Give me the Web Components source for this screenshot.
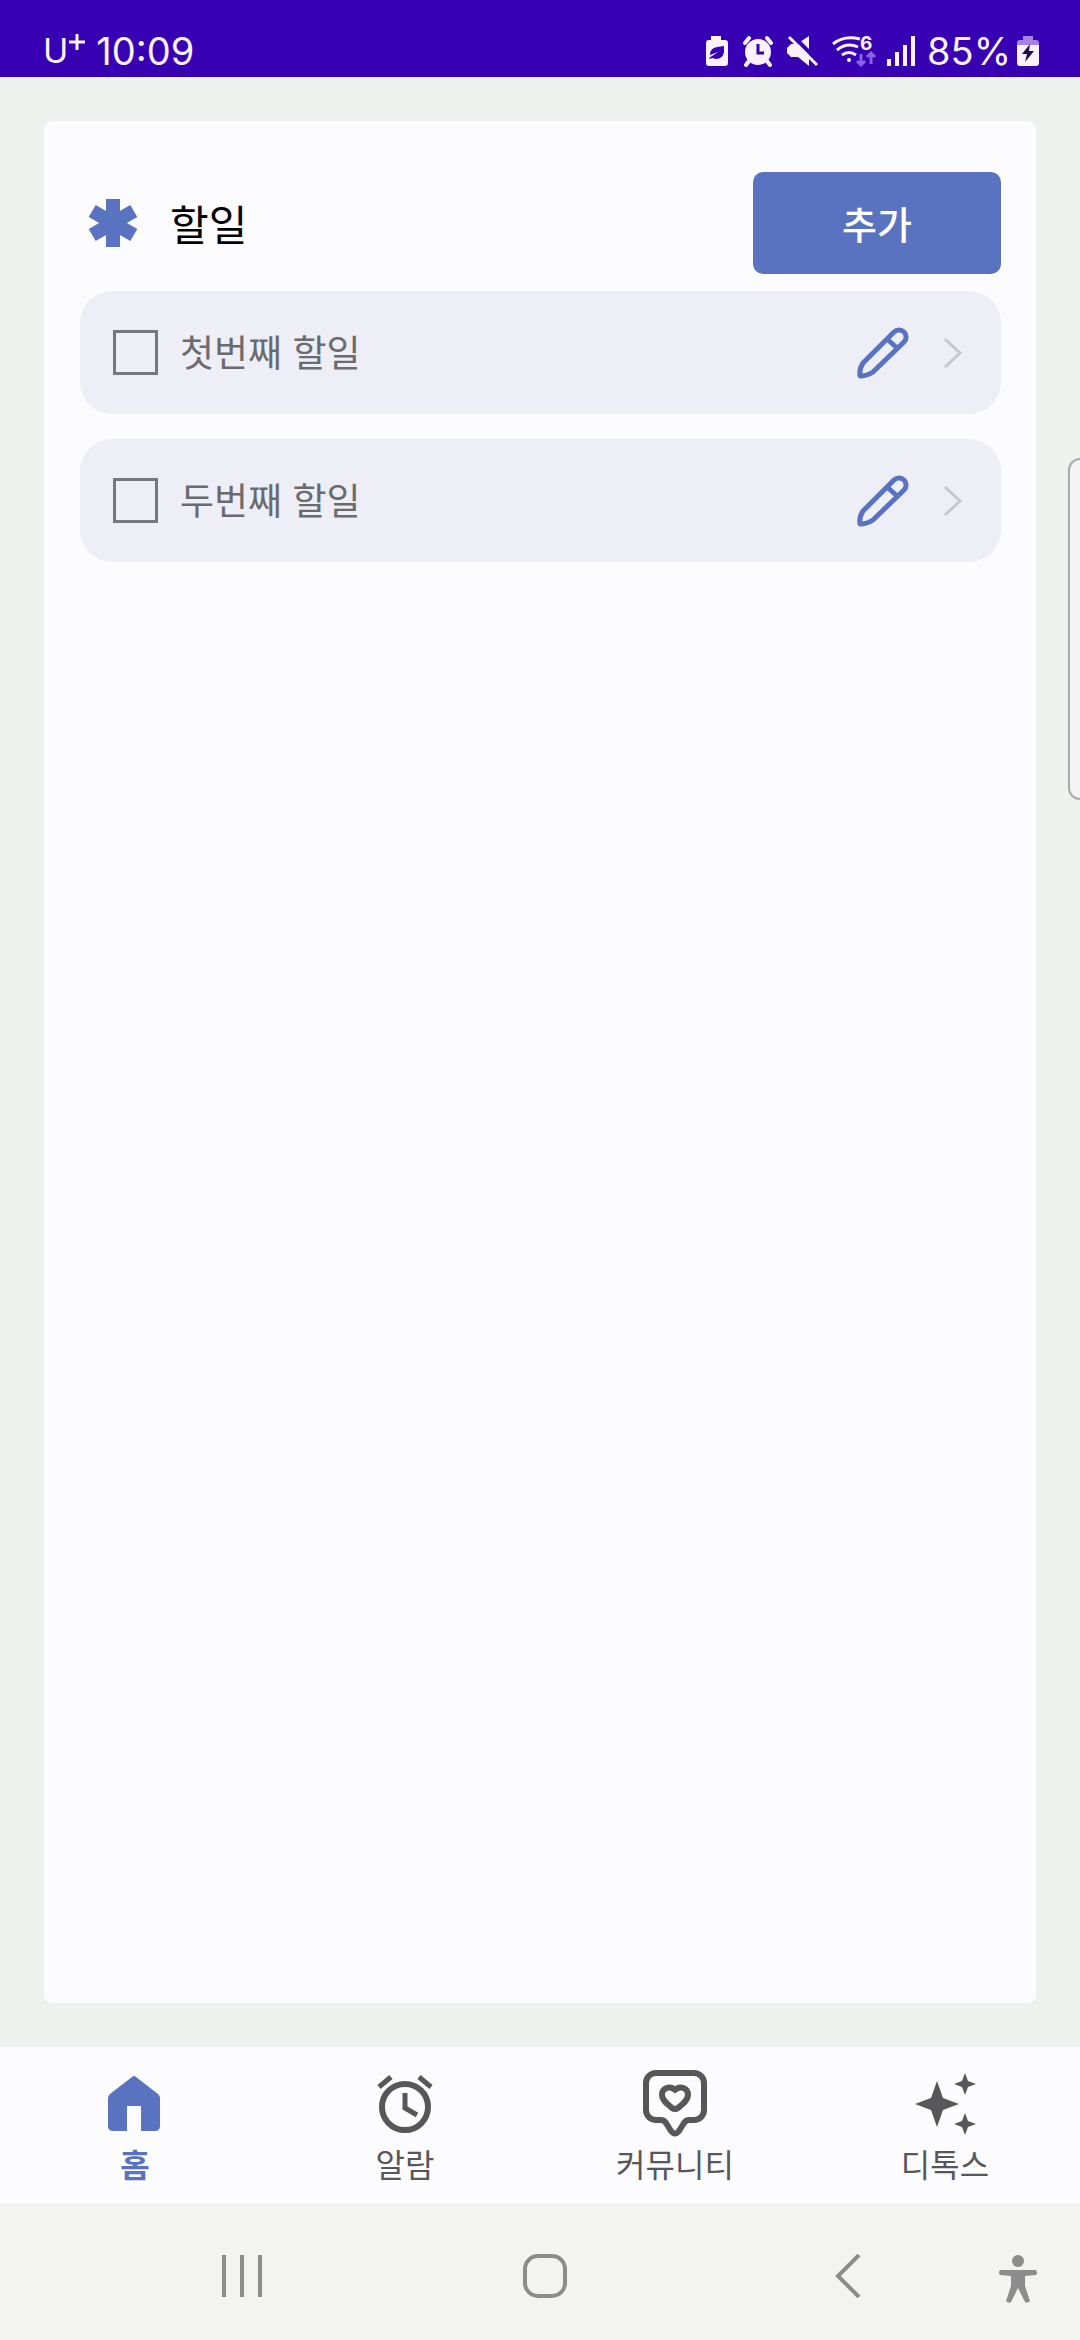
<!DOCTYPE html>
<html lang="ko">
<head>
<meta charset="utf-8">
<meta name="viewport" content="width=device-width, initial-scale=1">
<title>할일</title>
<style>
body {
  margin: 0;
  font-family: "Noto Sans CJK KR", sans-serif;
  --accent: #5a73c1;
  --page: #eef2ee;
  --surface: #fcfcfe;
  --muted: #6b6b6f;
}
</style>
</head>
<body>
<todo-app>
  <status-bar slot="top" carrier="U" time="10:09" battery="85%"></status-bar>
  <todo-card heading="할일" action="추가">
    <todo-item>첫번째 할일</todo-item>
    <todo-item>두번째 할일</todo-item>
  </todo-card>
  <tab-bar slot="bottom">
    <tab-item icon="home" active>홈</tab-item>
    <tab-item icon="alarm">알람</tab-item>
    <tab-item icon="community">커뮤니티</tab-item>
    <tab-item icon="detox">디톡스</tab-item>
  </tab-bar>
  <system-bar slot="bottom"></system-bar>
</todo-app>

<script>
// Tab icons, all on the same 68px grid
const tabIcons = {
  home: `<path fill="currentColor" d="M31 8q2-2 4 0L57 25q2 2 2 4v28q0 5-5 5H40V37H26v25H12q-5 0-5-5V29q0-2 2-4z"/>`,
  alarm: `<g fill="none" stroke="currentColor" stroke-width="5">
    <circle cx="34" cy="38" r="23" stroke-width="6"/>
    <path d="M34 24v15l12 7M8 18l12-10M48 8l12 10"/></g>`,
  community: `<g fill="none" stroke="currentColor" stroke-width="6" stroke-linejoin="round">
    <path d="M15 4h38a10 10 0 0 1 10 10v27a10 10 0 0 1-10 10h-5q-3 0-5 3l-5 8q-4 5-8 0l-5-8q-2-3-5-3h-5A10 10 0 0 1 5 41V14A10 10 0 0 1 15 4z"/>
    <path d="M34 21c-5-5-13-2-13 5 0 5 4 8 10 13q3 2 6 0c6-5 10-8 10-13 0-7-8-10-13-5z"/></g>`,
  detox: `<path fill="currentColor" d="M26 12l6 17 16 6-16 6-6 17-6-17-16-6 16-6zM54 4l3 8 8 3-8 3-3 8-3-8-8-3 8-3zM54 44l3 8 8 3-8 3-3 8-3-8-8-3 8-3z"/>`
};

// Helper for the elements that have fixed markup
function attach(host, html) {
  const shadow = host.attachShadow({ mode: 'open' });
  shadow.innerHTML = html;
  return shadow;
}

class TodoApp extends HTMLElement {
  constructor() {
    super();
    attach(this, `
      <style>
      :host {
        display: flex;
        flex-direction: column;
        min-height: 100vh;
        position: relative;
        background: var(--page);
      }
      main {
        flex: 1;
        display: flex;
        padding: 44px;
      }
      /* edge panel handle, floats over the page */
      .handle {
        position: absolute;
        top: 458px;
        right: 0;
        width: 10px;
        height: 338px;
        border: 2px solid #a9a9ad;
        border-right: 0;
        border-radius: 12px 0 0 12px;
        background: #f3f4f3;
      }
      </style>
      <slot name="top"></slot>
      <main><slot></slot></main>
      <slot name="bottom"></slot>
      <div class="handle"></div>
    `);
  }
}

class StatusBar extends HTMLElement {
  constructor() {
    super();
    attach(this, `
      <style>
      :host {
        display: flex;
        justify-content: space-between;
        align-items: center;
        height: 52px;
        padding: 25px 40px 0 43px;
        background: #3700b3;
        color: #fbf2ff;
        font-family: Inter, sans-serif;
        font-size: 38px;
        line-height: 52px;
      }
      div { display: flex; align-items: center; gap: 8px; }
      .left { gap: 10px; }
      .carrier { font-size: 34px; display: flex; }
      .level { display: flex; align-items: center; gap: 5px; }
      svg { display: block; overflow: visible; }
      </style>
      <div class="left">
        <span class="carrier">${this.getAttribute('carrier')}<svg width="18" height="32" viewBox="0 0 18 32"><path d="M9 9v16M1 17h16" stroke="currentColor" stroke-width="3"/></svg></span>
        <span>${this.getAttribute('time')}</span>
      </div>
      <div>
        <svg width="30" height="32" viewBox="0 0 30 32">
          <path fill="currentColor" d="M10 1h10v4h4q3 0 3 3v20q0 3-3 3H8q-3 0-3-3V8q0-3 3-3h2z"/>
          <path fill="#3700b3" d="M23 11v6q-1 7-8 7l-4-1-2 1-1-1 9-6-8 3q0-7 7-8z"/>
        </svg>
        <svg width="36" height="32" viewBox="0 0 36 32">
          <circle cx="19" cy="17" r="13" fill="currentColor"/>
          <path d="M6 8l4-5M28 3l4 5M10 26l-3 4M28 26l3 4" stroke="currentColor" stroke-width="4" stroke-linecap="round"/>
          <path d="M19 9v9h6" fill="none" stroke="#3700b3" stroke-width="3"/>
        </svg>
        <svg width="38" height="32" viewBox="0 0 38 32">
          <path fill="currentColor" d="M4 13l4-4h6L26 1v30L15 22H8l-4-4z"/>
          <path d="M9 0l28 28" stroke="#3700b3" stroke-width="4"/>
          <path d="M6 2l28 28" stroke="currentColor" stroke-width="3"/>
        </svg>
        <svg width="48" height="32" viewBox="0 0 48 32">
          <g fill="none" stroke="currentColor" stroke-width="3">
            <path d="M4 9q11-9 27-5M8 15q10-8 21-3M13 20q7-5 14 0"/>
          </g>
          <circle cx="20" cy="25" r="2" fill="currentColor"/>
          <text x="31" y="15" font-size="19" font-weight="700" fill="currentColor">6</text>
          <path d="M32 19v11M28 26l4 4 4-4M42 29V19M38 22l4-4 4 4" fill="none" stroke="#8a62e8" stroke-width="3"/>
        </svg>
        <svg width="34" height="32" viewBox="0 0 34 32">
          <path d="M4 24v7M12 17v14M20 10v21M28 1v30" stroke="currentColor" stroke-width="4"/>
        </svg>
        <span class="level">${this.getAttribute('battery')}
          <svg width="24" height="32" viewBox="0 0 24 32">
            <path fill="#a682e6" d="M7 1h10v4h3q3 0 3 3v3H1V8q0-3 3-3h3z"/>
            <path fill="currentColor" d="M1 10h22v18q0 3-3 3H4q-3 0-3-3z"/>
            <path fill="#1f0a52" d="M14 9L6 19h5l-2 8 9-11h-5z"/>
          </svg>
        </span>
      </div>
    `);
  }
}

class TodoCard extends HTMLElement {
  constructor() {
    super();
    attach(this, `
      <style>
      :host {
        display: flex;
        flex-direction: column;
        flex: 1;
        gap: 17px;
        padding: 51px 35px 51px 36px;
        border-radius: 8px;
        background: var(--surface);
      }
      header {
        display: flex;
        align-items: center;
        gap: 32px;
        padding-left: 8px;
      }
      h1 {
        flex: 1;
        margin: 0;
        font-size: 42px;
        font-weight: 400;
        line-height: 56px;
        color: #000;
      }
      button {
        width: 248px;
        height: 102px;
        padding: 0;
        border: 0;
        border-radius: 10px;
        background: var(--accent);
        color: #fff;
        font: 500 38px/48px "Noto Sans CJK KR", sans-serif;
      }
      .list {
        display: flex;
        flex-direction: column;
        gap: 25px;
      }
      </style>
      <header>
        <svg width="50" height="50" viewBox="0 0 50 50" fill="var(--accent)">
          <rect x="18" y="1" width="14" height="48"/>
          <rect x="18" y="1" width="14" height="48" transform="rotate(60 25 25)"/>
          <rect x="18" y="1" width="14" height="48" transform="rotate(-60 25 25)"/>
        </svg>
        <h1>${this.getAttribute('heading')}</h1>
        <button type="button">${this.getAttribute('action')}</button>
      </header>
      <div class="list"><slot></slot></div>
    `);
  }
}

class TodoItem extends HTMLElement {
  constructor() {
    super();
    attach(this, `
      <style>
      :host {
        display: flex;
        align-items: center;
        height: 123px;
        padding: 0 38px 0 33px;
        border-radius: 32px;
        background: #eeeef7;
        color: var(--muted);
      }
      input {
        appearance: none;
        width: 45px;
        height: 45px;
        margin: 0 22px 0 0;
        border: 3px solid #77777c;
      }
      label {
        flex: 1;
        padding-bottom: 3px;
        font-size: 37px;
        line-height: 48px;
      }
      button {
        padding: 0;
        border: 0;
        background: none;
      }
      .edit { margin-right: 34px; }
      svg { display: block; fill: none; }
      </style>
      <input type="checkbox" id="done">
      <label for="done"><slot></slot></label>
      <button type="button" class="edit" aria-label="수정">
        <svg width="52" height="52" viewBox="0 0 52 52" stroke="var(--accent)" stroke-width="5" stroke-linejoin="round">
          <path d="M6 36L37 5A7 7 0 0 1 47 15L16 45Q10 49 3 49 2 42 6 36zM30 12l9 8"/>
        </svg>
      </button>
      <button type="button" aria-label="열기">
        <svg width="20" height="32" viewBox="0 0 20 32" stroke="#c8c8ca" stroke-width="3">
          <path d="M2 2l15 14L2 30"/>
        </svg>
      </button>
    `);
  }
}

class TabBar extends HTMLElement {
  constructor() {
    super();
    attach(this, `
      <style>
      :host { display: block; background: var(--surface); }
      nav { display: grid; grid-template-columns: repeat(4, 1fr); }
      </style>
      <nav><slot></slot></nav>
    `);
  }
}

class TabItem extends HTMLElement {
  constructor() {
    super();
    attach(this, `
      <style>
      :host { display: block; color: #57575a; }
      :host([active]) { color: var(--accent); font-weight: 700; }
      a {
        display: flex;
        flex-direction: column;
        align-items: center;
        gap: 6px;
        padding: 22px 0 20px;
        color: inherit;
        text-decoration: none;
        font-size: 32px;
        line-height: 40px;
      }
      </style>
      <a href="#${this.getAttribute('icon')}">
        <svg width="68" height="68" viewBox="0 0 68 68">${tabIcons[this.getAttribute('icon')]}</svg>
        <span><slot></slot></span>
      </a>
    `);
  }
}

class SystemBar extends HTMLElement {
  constructor() {
    super();
    attach(this, `
      <style>
      :host {
        display: flex;
        gap: 10px;
        height: 128px;
        padding: 9px 22px 0 122px;
        background: #f3f3f1;
        color: #8c8c8c;
      }
      .keys {
        flex: 1;
        display: grid;
        grid-template-columns: repeat(3, 1fr);
        gap: 63px;
      }
      button {
        display: flex;
        align-items: center;
        justify-content: center;
        padding: 0;
        border: 0;
        background: none;
        color: inherit;
      }
      .access { width: 80px; }
      svg { fill: none; stroke: currentColor; stroke-width: 4; }
      </style>
      <div class="keys">
        <button type="button" aria-label="최근 앱"><svg width="44" height="44" viewBox="0 0 44 44"><path d="M4 1v42M22 1v42M40 1v42"/></svg></button>
        <button type="button" aria-label="홈"><svg width="44" height="44" viewBox="0 0 44 44"><rect x="2" y="2" width="40" height="40" rx="13"/></svg></button>
        <button type="button" aria-label="뒤로"><svg width="44" height="44" viewBox="0 0 44 44"><path d="M33 1L12 22l21 21"/></svg></button>
      </div>
      <button type="button" class="access" aria-label="접근성">
        <svg width="44" height="56" viewBox="0 0 44 56">
          <circle cx="22" cy="13" r="6" fill="currentColor" stroke="none"/>
          <path fill="currentColor" stroke="none" d="M4 22h36q2 3 0 5l-11 1v10l5 15q-3 3-5 1l-7-14-7 14q-2 2-5-1l5-15V28L4 27q-2-2 0-5z"/>
        </svg>
      </button>
    `);
  }
}

customElements.define('todo-app', TodoApp);
customElements.define('status-bar', StatusBar);
customElements.define('todo-card', TodoCard);
customElements.define('todo-item', TodoItem);
customElements.define('tab-bar', TabBar);
customElements.define('tab-item', TabItem);
customElements.define('system-bar', SystemBar);
</script>
</body>
</html>
